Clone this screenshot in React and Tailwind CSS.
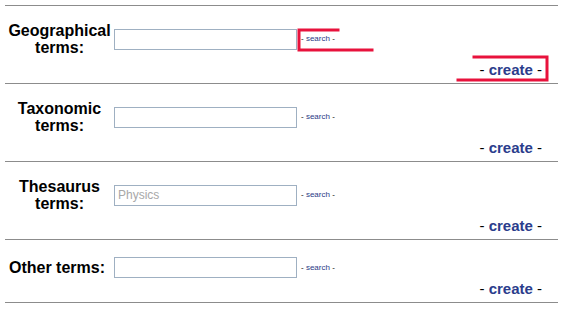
export default function App() {
  const rows = [
    { label: ["Geographical", "terms:"], value: "", h: "h-[78px]", pt: "pt-[16px]", lw: "w-[109px]" },
    { label: ["Taxonomic", "terms:"], value: "", h: "h-[78px]", pt: "pt-[16px]", lw: "w-[109px]" },
    { label: ["Thesaurus", "terms:"], value: "Physics", h: "h-[78px]", pt: "pt-[16px]", lw: "w-[109px]" },
    { label: ["Other terms:"], value: "", h: "h-[63px]", pt: "pt-[17px]", lw: "w-[109px] pr-[5px]" },
  ];
  return (
    <div
      className="relative w-[563px] h-[309px] bg-white pt-[5px] px-[5px] overflow-hidden"
      style={{ fontFamily: '"Liberation Sans", Arial, sans-serif' }}
    >
      <div className="border-b border-[#8c8c8c]">
        {rows.map((r, i) => (
          <div key={i} className={`border-t border-[#8c8c8c] ${r.h} ${r.pt} flex flex-col`}>
            <div className="flex items-center">
              <div className={`${r.lw} text-center font-bold text-[16px] leading-[17px] text-black`}>
                {r.label.map((l, j) => (
                  <div key={j}>{l}</div>
                ))}
              </div>
              <div className="w-[183px] h-[21px] border border-[#9fb0c2] bg-white px-[3px] text-[12px] leading-[19px] text-[#a8a8a8]">
                {r.value}
              </div>
              <div className="ml-[4px] text-[8px] leading-[10px] text-black">
                - <span className="text-[#2a3a86]">search</span> -
              </div>
            </div>
            <div className="mt-auto pb-[5px] text-right pr-[16px] text-[15px] leading-[16px] text-black">
              - <span className="font-bold text-[#2b3d8c]">create</span> -
            </div>
          </div>
        ))}
      </div>
      <svg className="absolute left-0 top-0 pointer-events-none" width="563" height="309">
        <g stroke="#e8123c" strokeWidth="3" fill="none" strokeLinecap="square">
          <path d="M338 30 L299 30 L299 50 L372 50" />
          <path d="M474 57 L547 57 L547 80 L458 80" />
        </g>
      </svg>
    </div>
  );
}
